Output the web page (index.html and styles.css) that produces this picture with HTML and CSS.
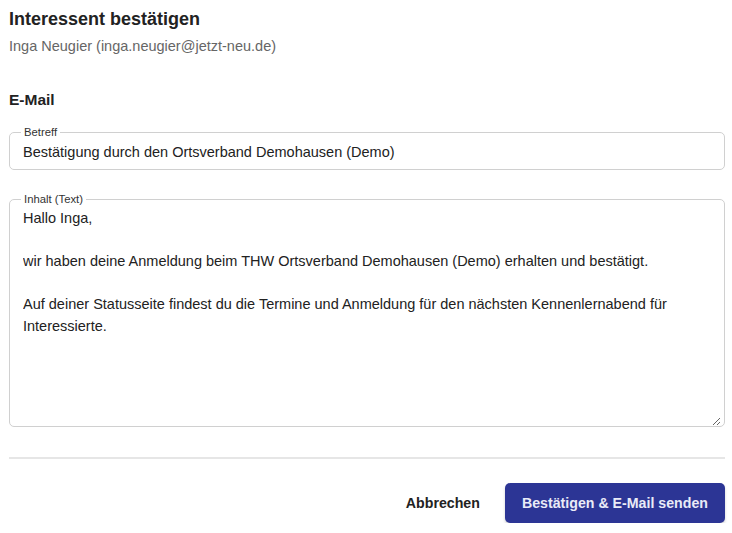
FILE: index.html
```html
<!DOCTYPE html>
<html lang="de">
<head>
<meta charset="utf-8">
<title>Interessent bestätigen</title>
<link rel="stylesheet" href="styles.css">
</head>
<body>
<div class="dialog">
  <header class="head">
    <h1 class="title">Interessent bestätigen</h1>
    <p class="subtitle">Inga Neugier (inga.neugier@jetzt-neu.de)</p>
  </header>
  <section class="mail">
    <h2 class="section-title">E-Mail</h2>
    <fieldset class="field">
      <legend class="field-label">Betreff</legend>
      <input class="field-input" type="text" value="Bestätigung durch den Ortsverband Demohausen (Demo)">
    </fieldset>
    <fieldset class="field field-area">
      <legend class="field-label">Inhalt (Text)</legend>
      <textarea class="field-textarea">Hallo Inga,

wir haben deine Anmeldung beim THW Ortsverband Demohausen (Demo) erhalten und bestätigt.

Auf deiner Statusseite findest du die Termine und Anmeldung für den nächsten Kennenlernabend für Interessierte.</textarea>
    </fieldset>
  </section>
  <hr class="divider">
  <footer class="actions">
    <button class="btn btn-text" type="button">Abbrechen</button>
    <button class="btn btn-primary" type="button">Bestätigen &amp; E-Mail senden</button>
  </footer>
</div>
</body>
</html>
```
FILE: styles.css
```css
* { box-sizing: border-box; }
html, body { margin: 0; padding: 0; background: #fff; }
body {
  font-family: "Liberation Sans", Arial, sans-serif;
  color: #222;
}
.dialog {
  padding: 7px 7px 0 9px;
  display: flex;
  flex-direction: column;
}
.title {
  margin: 0;
  font-size: 18px;
  font-weight: 700;
  line-height: 24px;
  color: #222;
}
.subtitle {
  margin: 5px 0 0;
  font-size: 14.5px;
  line-height: 20px;
  color: #666;
}
.mail {
  margin-top: 34px;
  display: flex;
  flex-direction: column;
}
.section-title {
  margin: 0 0 16px;
  font-size: 15.5px;
  font-weight: 700;
  line-height: 20px;
  color: #222;
}
.field {
  margin: 0;
  padding: 0 13px;
  border: 1px solid #d0d0d0;
  border-radius: 5px;
  min-width: 0;
}
.field-label {
  padding: 0 3px;
  margin-left: -2px;
  font-size: 11.3px;
  line-height: 12px;
  color: #333;
}
.field-input {
  display: block;
  width: 100%;
  border: 0;
  outline: none;
  padding: 0;
  margin: -3px 0 0;
  height: 34px;
  font: 14.5px/20px "Liberation Sans", Arial, sans-serif;
  color: #222;
  background: transparent;
}
.field-area {
  margin-top: 23px;
  padding-right: 3px;
}
.field-textarea {
  display: block;
  width: 100%;
  height: 221px;
  border: 0;
  outline: none;
  padding: 3px 10px 0 0;
  margin: 0;
  font: 14.5px/21.5px "Liberation Sans", Arial, sans-serif;
  color: #222;
  background: transparent;
  resize: vertical;
}
.divider {
  margin: 30px 0 0;
  border: 0;
  height: 2px;
  background: #e6e6e6;
}
.actions {
  margin-top: 24px;
  display: flex;
  justify-content: flex-end;
  align-items: center;
  gap: 12px;
}
.btn {
  font-family: "Liberation Sans", Arial, sans-serif;
  font-size: 14.2px;
  font-weight: 700;
  border: 0;
  cursor: pointer;
  height: 40px;
  border-radius: 5px;
}
.btn-text {
  background: transparent;
  color: #222;
  padding: 0 13px;
}
.btn-primary {
  background: #2c3595;
  color: #e9ebf7;
  padding: 0 17px;
  box-shadow: 0 2px 3px rgba(0,0,0,0.18);
}
```
